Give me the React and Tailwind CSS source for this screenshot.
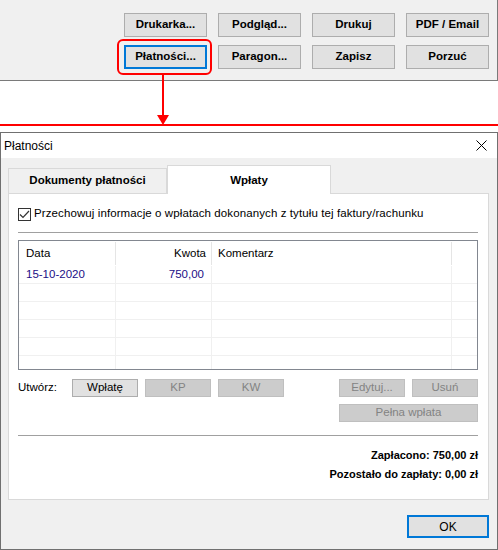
import React from "react";

const font = { fontFamily: '"Liberation Sans", Arial, sans-serif' };

const TopButton = ({ label, focused }) => (
  <button
    className={`h-6 w-[83px] bg-[#e1e1e1] text-[11.5px] font-bold text-black flex items-center justify-center ${
      focused ? "border-2 border-[#0078d7]" : "border border-[#adadad]"
    }`}
  >
    {label}
  </button>
);

const SmallButton = ({ label, disabled, className = "w-[66px]" }) => (
  <button
    className={`h-[18px] ${className} border text-[11.5px] flex items-center justify-center ${
      disabled
        ? "bg-[#cccccc] border-[#bfbfbf] text-[#838383]"
        : "bg-[#e1e1e1] border-[#adadad] text-black"
    }`}
  >
    {label}
  </button>
);

const rows = [
  { date: "15-10-2020", amount: "750,00", comment: "" },
  {},
  {},
  {},
  {},
  {},
];

export default function App() {
  return (
    <div className="w-[498px] h-[550px] bg-white relative overflow-hidden" style={font}>
      {/* invoice toolbar */}
      <div className="h-[81px] bg-[#f0f0f0] border-b border-r border-[#7a7a7a] pt-[13px] pl-[124px]">
        <div className="grid grid-cols-[83px_83px_83px_83px] gap-x-[11px] gap-y-[8px]">
          <TopButton label="Drukarka..." />
          <TopButton label="Podgląd..." />
          <TopButton label="Drukuj" />
          <TopButton label="PDF / Email" />
          <TopButton label="Płatności..." focused />
          <TopButton label="Paragon..." />
          <TopButton label="Zapisz" />
          <TopButton label="Porzuć" />
        </div>
      </div>

      {/* annotation */}
      <div className="absolute left-[117px] top-[39px] w-[95px] h-[36px] border-2 border-[#ff0000] rounded-[6px]" />
      <svg className="absolute left-[156px] top-[74px]" width="14" height="52" viewBox="0 0 14 52">
        <line x1="7" y1="0" x2="7" y2="42" stroke="#ff0000" strokeWidth="2" />
        <polygon points="1,41 13,41 7,51" fill="#ff0000" />
      </svg>
      <div className="mt-[43px] h-[2px] bg-[#ff0000]" />

      {/* dialog */}
      <div className="mt-[6px] h-[418px] border border-[#707070] bg-[#f0f0f0] flex flex-col">
        <div className="h-[25px] bg-white flex items-center justify-between pl-[3px] pr-[10px]">
          <span className="text-[12px] text-black">Płatności</span>
          <svg width="11" height="11" viewBox="0 0 11 11">
            <path d="M0.5 0.5 L10.5 10.5 M10.5 0.5 L0.5 10.5" stroke="#000" strokeWidth="1" />
          </svg>
        </div>

        <div className="pl-[7px] pr-[8px] pt-[7px]">
          {/* tabs */}
          <div className="flex items-end h-[28px]">
            <div className="w-[159px] h-[25px] border border-b-0 border-[#d9d9d9] bg-[#f0f0f0] flex items-center justify-center text-[11.5px] font-bold">
              Dokumenty płatności
            </div>
            <div className="w-[164px] h-[29px] -mb-px border border-b-0 border-[#d9d9d9] bg-white flex items-start pt-[6px] justify-center text-[11.5px] font-bold relative z-10">
              Wpłaty
            </div>
          </div>

          {/* tab panel */}
          <div className="h-[307px] bg-white border border-[#d9d9d9] pl-[9px] pr-[10px] pt-[13px]">
            <div className="flex items-center gap-[3px] h-[14px]">
              <div className="w-[13px] h-[13px] border border-[#333] flex items-center justify-center">
                <svg width="11" height="9" viewBox="0 0 11 9">
                  <path d="M1 4.5 L4 7.5 L10 1" stroke="#333" strokeWidth="1.2" fill="none" />
                </svg>
              </div>
              <span className="text-[11.5px] tracking-[0.1px]">
                Przechowuj informacje o wpłatach dokonanych z tytułu tej faktury/rachunku
              </span>
            </div>

            <div className="mt-[11px] h-[2px] border-t border-[#a0a0a0] border-b border-b-white" />

            {/* payments list */}
            <div className="mt-[6px] h-[130px] border border-[#828790] overflow-hidden">
              <div className="grid grid-cols-[97px_96px_240px_1fr] h-[25px] text-[11.5px]">
                <div className="flex items-center pl-[7px] border-r border-[#e5e5e5] my-[1px]">Data</div>
                <div className="flex items-center justify-end pr-[5px] border-r border-[#e5e5e5] my-[1px]">Kwota</div>
                <div className="flex items-center pl-[6px] border-r border-[#e5e5e5] my-[1px]">Komentarz</div>
                <div />
              </div>
              {rows.map((r, i) => (
                <div
                  key={i}
                  className="grid grid-cols-[97px_96px_240px_1fr] h-[18px] text-[11.5px] text-[#1b0e86] border-b border-[#f0f0f0]"
                >
                  <div className="flex items-center pl-[7px] border-r border-[#f0f0f0]">{r.date}</div>
                  <div className="flex items-center justify-end pr-[7px] border-r border-[#f0f0f0]">{r.amount}</div>
                  <div className="flex items-center pl-[6px] border-r border-[#f0f0f0]">{r.comment}</div>
                  <div />
                </div>
              ))}
            </div>

            {/* actions */}
            <div className="mt-[9px] flex items-center h-[18px]">
              <span className="text-[11.5px] w-[54px]">Utwórz:</span>
              <div className="flex gap-[7px]">
                <SmallButton label="Wpłatę" />
                <SmallButton label="KP" disabled />
                <SmallButton label="KW" disabled />
              </div>
              <div className="ml-auto flex gap-[7px]">
                <SmallButton label="Edytuj..." disabled />
                <SmallButton label="Usuń" disabled />
              </div>
            </div>
            <div className="mt-[7px] flex justify-end">
              <SmallButton label="Pełna wpłata" disabled className="w-[139px]" />
            </div>

            <div className="mt-[13px] h-[2px] border-t border-[#a0a0a0] border-b border-b-white" />

            <div className="mt-[11px] flex flex-col items-end gap-[5px] text-[11px] font-bold leading-[14px]">
              <span>Zapłacono: 750,00 zł</span>
              <span>Pozostało do zapłaty: 0,00 zł</span>
            </div>
          </div>

          <div className="mt-[15px] flex justify-end">
            <button className="w-[82px] h-[23px] bg-[#e1e1e1] border-2 border-[#0078d7] text-[12px] flex items-center justify-center">
              OK
            </button>
          </div>
        </div>
      </div>
    </div>
  );
}
